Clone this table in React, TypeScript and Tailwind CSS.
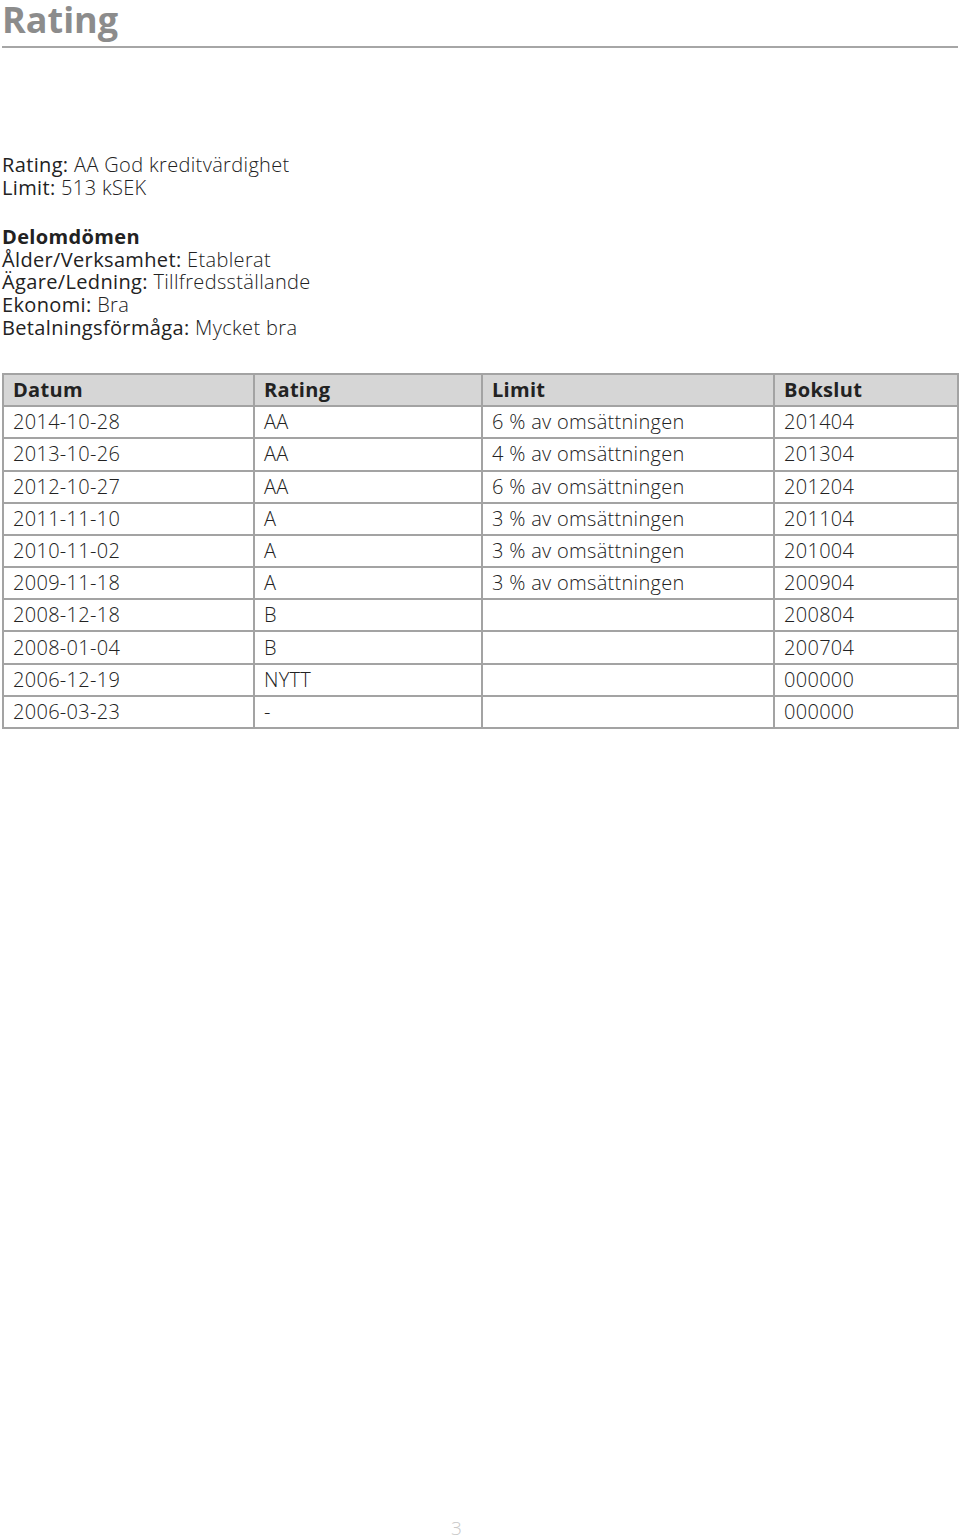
import React from "react";

const rows: [string, string, string, string][] = [
  ["2014-10-28", "AA", "6 % av omsättningen", "201404"],
  ["2013-10-26", "AA", "4 % av omsättningen", "201304"],
  ["2012-10-27", "AA", "6 % av omsättningen", "201204"],
  ["2011-11-10", "A", "3 % av omsättningen", "201104"],
  ["2010-11-02", "A", "3 % av omsättningen", "201004"],
  ["2009-11-18", "A", "3 % av omsättningen", "200904"],
  ["2008-12-18", "B", "", "200804"],
  ["2008-01-04", "B", "", "200704"],
  ["2006-12-19", "NYTT", "", "000000"],
  ["2006-03-23", "-", "", "000000"],
];

function Line({ label, value }: { label: string; value: string }) {
  return (
    <div className="h-[22.6px] leading-[22.6px] whitespace-nowrap">
      <span className="font-normal">{label}</span>{" "}
      <span className="font-light">{value}</span>
    </div>
  );
}

export default function App() {
  return (
    <div
      className="relative w-[960px] h-[1539px] bg-white text-[#222]"
      style={{ fontFamily: '"Open Sans", "Noto Sans", sans-serif' }}
    >
      <div className="px-[2px]">
        <h1 className="text-[36px] leading-[40px] font-bold text-[#8c8c8c]">Rating</h1>
        <div className="mt-[6px] h-[2px] bg-[#a6a6a6]" />
      </div>

      <div className="pl-[2px] mt-[106px] text-[20px] tracking-[0.35px]">
        <Line label="Rating:" value="AA God kreditvärdighet" />
        <Line label="Limit:" value="513 kSEK" />
        <div className="h-[27px]" />
        <div className="h-[22.6px] leading-[22.6px] font-bold">Delomdömen</div>
        <Line label="Ålder/Verksamhet:" value="Etablerat" />
        <Line label="Ägare/Ledning:" value="Tillfredsställande" />
        <Line label="Ekonomi:" value="Bra" />
        <Line label="Betalningsförmåga:" value="Mycket bra" />
      </div>

      <div className="pl-[2px] mt-[34px]">
        <table className="w-[955px] table-fixed border-collapse text-[20px] tracking-[0.3px]">
          <colgroup>
            <col className="w-[251px]" />
            <col className="w-[228px]" />
            <col className="w-[292px]" />
            <col className="w-[184px]" />
          </colgroup>
          <thead>
            <tr className="h-[32px] bg-[#d6d6d6]">
              {["Datum", "Rating", "Limit", "Bokslut"].map((h) => (
                <th
                  key={h}
                  className="border-[2.5px] border-[#a3a3a3] text-left font-bold pl-[9px] py-0 leading-[26px]"
                >
                  {h}
                </th>
              ))}
            </tr>
          </thead>
          <tbody>
            {rows.map((r, i) => (
              <tr key={i} className="h-[32.2px]">
                {r.map((c, j) => (
                  <td
                    key={j}
                    className="border-[2.5px] border-[#a3a3a3] pl-[9px] py-0 font-light leading-[26px] whitespace-nowrap"
                  >
                    {c}
                  </td>
                ))}
              </tr>
            ))}
          </tbody>
        </table>
      </div>

      <div className="absolute left-[451px] top-[1514px] text-[19px] font-light text-[#c8c8c8]">3</div>
    </div>
  );
}
